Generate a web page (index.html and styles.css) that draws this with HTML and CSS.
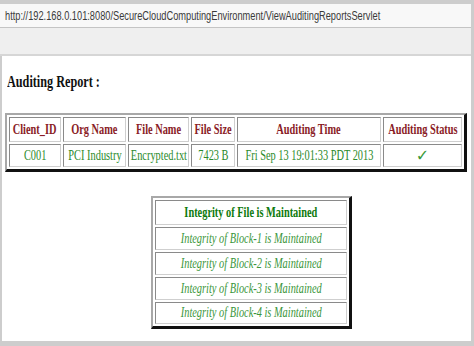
FILE: index.html
```html
<!DOCTYPE html>
<html>
<head>
<meta charset="utf-8">
<link rel="stylesheet" href="styles.css">
</head>
<body>
<div class="top"></div>
<div class="url"><span class="sq left">http://192.168.0.101:8080/SecureCloudComputingEnvironment/ViewAuditingReportsServlet</span></div>
<div class="tool"></div>
<div class="page">
  <h1 class="title"><span class="sq left">Auditing Report :</span></h1>
  <table class="report">
    <colgroup>
      <col class="c1"><col class="c2"><col class="c3"><col class="c4"><col class="c5"><col class="c6">
    </colgroup>
    <tr class="hrow">
      <th><div class="fit"><span class="sq">Client_ID</span></div></th>
      <th><div class="fit"><span class="sq">Org Name</span></div></th>
      <th><div class="fit"><span class="sq">File Name</span></div></th>
      <th><div class="fit"><span class="sq">File Size</span></div></th>
      <th><div class="fit"><span class="sq">Auditing Time</span></div></th>
      <th><div class="fit"><span class="sq">Auditing Status</span></div></th>
    </tr>
    <tr class="drow">
      <td><div class="fit"><span class="sq">C001</span></div></td>
      <td><div class="fit"><span class="sq">PCI Industry</span></div></td>
      <td><div class="fit"><span class="sq">Encrypted.txt</span></div></td>
      <td><div class="fit"><span class="sq">7423 B</span></div></td>
      <td><div class="fit"><span class="sq">Fri Sep 13 19:01:33 PDT 2013</span></div></td>
      <td><div class="fit"><span class="check">&#10003;</span></div></td>
    </tr>
  </table>
  <table class="integrity">
    <tr class="ihead"><th><div class="fit"><span class="sq">Integrity of File is Maintained</span></div></th></tr>
    <tr class="irow"><td><div class="fit"><span class="sq">Integrity of Block-1 is Maintained</span></div></td></tr>
    <tr class="irow"><td><div class="fit"><span class="sq">Integrity of Block-2 is Maintained</span></div></td></tr>
    <tr class="irow"><td><div class="fit"><span class="sq">Integrity of Block-3 is Maintained</span></div></td></tr>
    <tr class="irow last"><td><div class="fit"><span class="sq">Integrity of Block-4 is Maintained</span></div></td></tr>
  </table>
</div>
</body>
</html>
```
FILE: styles.css
```css
html, body {
  margin: 0;
  padding: 0;
}
body {
  height: 346px;
  overflow: hidden;
  background: #cdcdcd;
  display: flex;
  flex-direction: column;
  font-family: "Liberation Serif", "Times New Roman", serif;
}
.top {
  height: 4px;
  flex: none;
}
.url {
  flex: none;
  height: 23px;
  margin-right: 3px;
  background: #f8f8f8;
  border-bottom: 1px solid #c4c4c4;
  display: flex;
  align-items: center;
  padding-left: 5px;
  font-family: "Liberation Sans", Arial, sans-serif;
  font-size: 12.5px;
  color: #3a3a3a;
  white-space: nowrap;
  overflow: hidden;
}
.tool {
  flex: none;
  height: 26px;
  margin-right: 3px;
  background: #efefef;
  border-bottom: 2px solid #d6d6d6;
}
.page {
  flex: 1;
  background: #ffffff;
  margin: 0 3px 5px 2px;
  display: flex;
  flex-direction: column;
  align-items: flex-start;
}
.sq {
  display: inline-block;
  white-space: nowrap;
  transform: scaleX(0.74);
  flex: none;
}
.sq.left {
  transform-origin: left center;
}
.title {
  margin: 16px 0 0 5px;
  font-size: 16.5px;
  line-height: 19px;
  font-weight: bold;
  color: #111;
}
.fit {
  display: flex;
  justify-content: center;
  align-items: center;
}
table {
  border-collapse: separate;
  border-spacing: 2px;
  table-layout: fixed;
  border-style: solid;
  border-width: 2px 3px 3px 2px;
  border-color: #a8a8a8 #111 #111 #a8a8a8;
  background: #fff;
}
th, td {
  padding: 0;
  border: 1px solid;
  border-color: #8a8a8a #cfcfcf #cfcfcf #8a8a8a;
  font-size: 14px;
  text-align: center;
  overflow: visible;
}
.report {
  margin: 22px 0 0 3px;
  width: 462px;
}
.c1 { width: 52px; }
.c2 { width: 63px; }
.c3 { width: 61px; }
.c4 { width: 44px; }
.c5 { width: 144px; }
.c6 { width: 79px; }
.hrow th {
  height: 23px;
  color: #8a1c26;
  font-weight: bold;
}
.drow td {
  height: 21px;
  color: #2a8a2a;
}
.check {
  color: #3a9a3a;
  font-size: 16px;
  font-family: "DejaVu Sans", sans-serif;
}
.integrity {
  margin: 24px 0 0 149px;
  width: 201px;
}
.ihead th {
  height: 23px;
  color: #0d7a0d;
  font-weight: bold;
}
.irow td {
  height: 21px;
  color: #3a963a;
  font-style: italic;
}
.irow.last td {
  height: 20px;
}
```
